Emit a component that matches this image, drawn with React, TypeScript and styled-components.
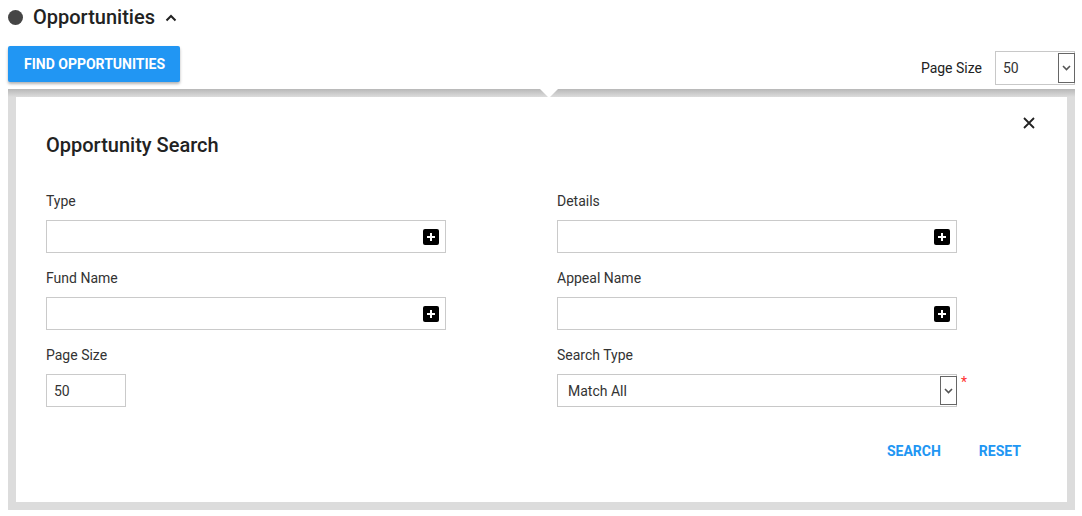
import styled, { createGlobalStyle } from 'styled-components'

const GlobalStyle = createGlobalStyle`
    body {
        margin: 0;
        background: #fff;
        font-family: Roboto, "Liberation Sans", sans-serif;
        color: #222;
    }
`

const Page = styled.div`
    padding: 0 7px 0 8px;
`

const Header = styled.div`
    display: flex;
    align-items: center;
    height: 34px;
`

const Dot = styled.span`
    width: 15px;
    height: 15px;
    border-radius: 50%;
    background: #454545;
    margin-right: 10px;
`

const Title = styled.h2`
    margin: 0;
    font-size: 20px;
    font-weight: 500;
    color: #222;
`

const Chevron = styled.svg`
    margin-left: 10px;
    margin-top: 2px;
`

const Toolbar = styled.div`
    display: flex;
    align-items: flex-start;
    justify-content: space-between;
    margin-top: 12px;
    height: 43px;
`

const PrimaryButton = styled.button`
    height: 36px;
    padding: 0 15px 0 16px;
    border: none;
    border-radius: 2px;
    background: #2196f3;
    color: #fff;
    font-family: inherit;
    font-size: 14px;
    font-weight: 700;
    box-shadow: 0 2px 3px rgba(0, 0, 0, 0.3);
`

const PageSize = styled.div`
    display: flex;
    align-items: center;
    gap: 13px;
    margin-top: 5px;
    font-size: 14px;
    color: #222;
`

const SelectBox = styled.div<{ $width: number; $height: number; $pad: number }>`
    display: flex;
    flex-shrink: 0;
    align-items: center;
    justify-content: space-between;
    width: ${(p) => p.$width}px;
    height: ${(p) => p.$height}px;
    box-sizing: border-box;
    border: 1px solid #c8c8c8;
    font-size: 14px;
    color: #333;
    padding-left: ${(p) => p.$pad}px;
    background: #fff;
`

const SelectArrow = styled.span`
    display: flex;
    align-items: center;
    justify-content: center;
    width: 17px;
    height: calc(100% - 2px);
    box-sizing: border-box;
    border: 1px solid #666;
    margin-right: -1px;
`

const Panel = styled.div`
    position: relative;
    padding: 8px;
    background-color: #dcdcdc;
    background-image: linear-gradient(#b8b8b8, #dcdcdc 8px);
`

const Notch = styled.span`
    position: absolute;
    top: 0;
    left: 532px;
    width: 0;
    height: 0;
    border-left: 9px solid transparent;
    border-right: 9px solid transparent;
    border-top: 9px solid #fff;
`

const Card = styled.div`
    position: relative;
    background: #fff;
    padding: 36px 30px 43px;
`

const CloseButton = styled.button`
    position: absolute;
    top: 20px;
    right: 32px;
    border: none;
    background: none;
    padding: 0;
    display: flex;
`

const CardTitle = styled.h3`
    margin: 0 0 35px;
    font-size: 20px;
    font-weight: 500;
    color: #222;
`

const FormGrid = styled.div`
    display: grid;
    grid-template-columns: 400px 400px;
    column-gap: 111px;
    row-gap: 16px;
`

const Field = styled.div`
    display: flex;
    flex-direction: column;
`

const Label = styled.label`
    font-size: 14px;
    color: #333;
    margin-bottom: 10px;
    line-height: 18px;
`

const InputRow = styled.div`
    display: flex;
    align-items: flex-start;
    height: 33px;
`

const Input = styled.div<{ $width?: number }>`
    display: flex;
    align-items: center;
    justify-content: space-between;
    width: ${(p) => p.$width ?? 400}px;
    height: 33px;
    box-sizing: border-box;
    border: 1px solid #cacaca;
    padding: 0 6px 0 7px;
    font-size: 14px;
    color: #333;
`

const PlusIcon = styled.span`
    display: flex;
    align-items: center;
    justify-content: center;
    width: 16px;
    height: 16px;
    border-radius: 2px;
    background: #000;
`

const Required = styled.span`
    color: #ff3030;
    font-size: 14px;
    line-height: 1;
    margin-left: 4px;
    margin-top: 1px;
`

const Actions = styled.div`
    display: flex;
    justify-content: flex-end;
    gap: 38px;
    margin-top: 36px;
    padding-right: 16px;
`

const TextButton = styled.button`
    border: none;
    background: none;
    padding: 0;
    font-family: inherit;
    font-size: 14px;
    font-weight: 700;
    color: #2196f3;
`

function Plus() {
    return (
        <PlusIcon>
            <svg width="10" height="10" viewBox="0 0 10 10">
                <path d="M5 1v8M1 5h8" stroke="#fff" strokeWidth="2" />
            </svg>
        </PlusIcon>
    )
}

function Caret() {
    return (
        <svg width="9" height="6" viewBox="0 0 9 6">
            <path d="M1 1l3.5 3.5L8 1" stroke="#555" strokeWidth="1.6" fill="none" />
        </svg>
    )
}

function LookupField({ label }: { label: string }) {
    return (
        <Field>
            <Label>{label}</Label>
            <Input>
                <span />
                <Plus />
            </Input>
        </Field>
    )
}

export default function App() {
    return (
        <>
            <GlobalStyle />
            <Page>
                <Header>
                    <Dot />
                    <Title>Opportunities</Title>
                    <Chevron width="12" height="8" viewBox="0 0 12 8">
                        <path d="M1.5 6.5L6 2l4.5 4.5" stroke="#222" strokeWidth="2" fill="none" />
                    </Chevron>
                </Header>
                <Toolbar>
                    <PrimaryButton>FIND OPPORTUNITIES</PrimaryButton>
                    <PageSize>
                        Page Size
                        <SelectBox $width={80} $height={34} $pad={7}>
                            50
                            <SelectArrow>
                                <Caret />
                            </SelectArrow>
                        </SelectBox>
                    </PageSize>
                </Toolbar>
                <Panel>
                    <Notch />
                    <Card>
                        <CloseButton aria-label="close">
                            <svg width="12" height="12" viewBox="0 0 12 12">
                                <path d="M1 1l10 10M11 1L1 11" stroke="#222" strokeWidth="1.8" />
                            </svg>
                        </CloseButton>
                        <CardTitle>Opportunity Search</CardTitle>
                        <FormGrid>
                            <LookupField label="Type" />
                            <LookupField label="Details" />
                            <LookupField label="Fund Name" />
                            <LookupField label="Appeal Name" />
                            <Field>
                                <Label>Page Size</Label>
                                <Input $width={80}>50</Input>
                            </Field>
                            <Field>
                                <Label>Search Type</Label>
                                <InputRow>
                                    <SelectBox $width={400} $height={33} $pad={10}>
                                        Match All
                                        <SelectArrow>
                                            <Caret />
                                        </SelectArrow>
                                    </SelectBox>
                                    <Required>*</Required>
                                </InputRow>
                            </Field>
                        </FormGrid>
                        <Actions>
                            <TextButton>SEARCH</TextButton>
                            <TextButton>RESET</TextButton>
                        </Actions>
                    </Card>
                </Panel>
            </Page>
        </>
    )
}
